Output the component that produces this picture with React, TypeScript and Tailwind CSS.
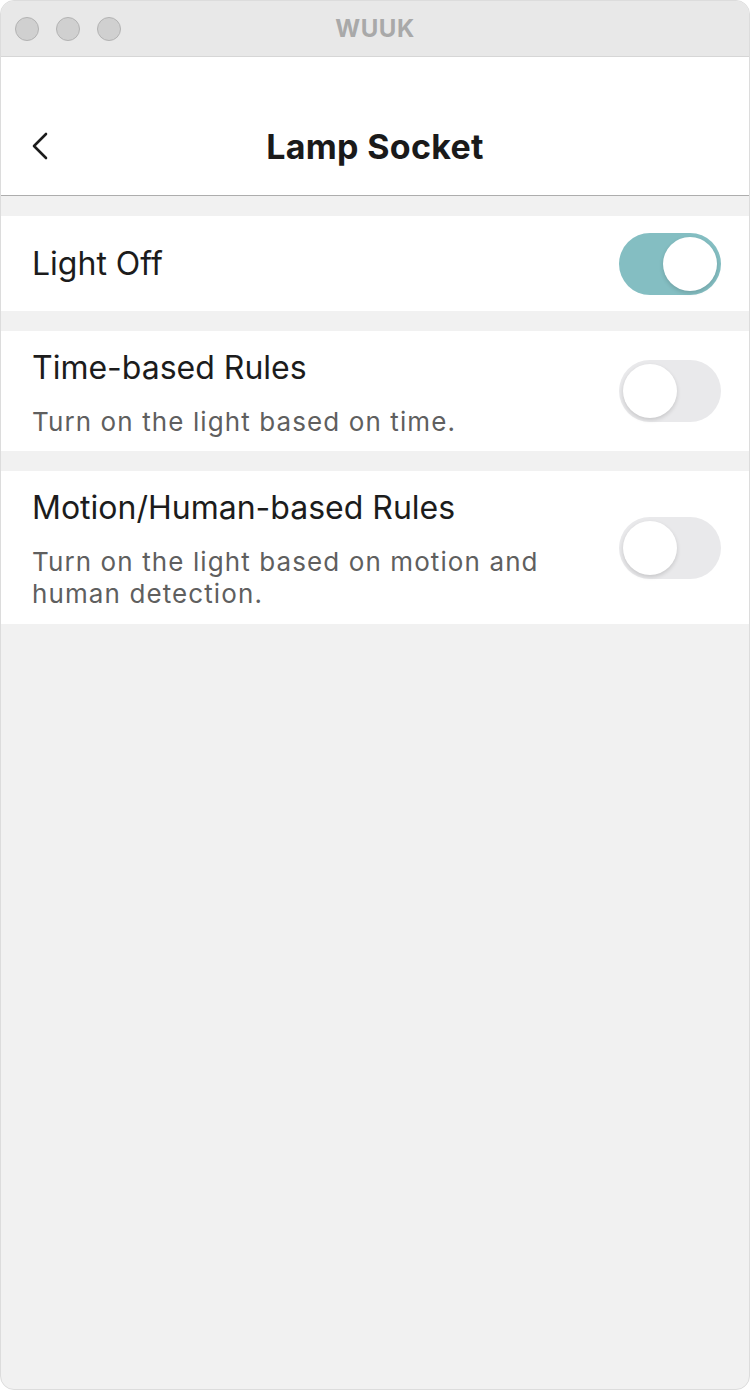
import { useState } from "react";

function Toggle({ on, onClick }: { on: boolean; onClick: () => void }) {
    return (
        <button
            onClick={onClick}
            className={`relative w-[102px] h-[62px] rounded-full shrink-0 self-center transition-colors ${on ? "bg-[#84bec2]" : "bg-[#e9e9eb]"
                }`}
        >
            <span
                className={`absolute top-[4px] w-[54px] h-[54px] rounded-full bg-white shadow-[0_2px_4px_rgba(0,0,0,0.15)] transition-all ${on ? "left-[44px]" : "left-[4px]"
                    }`}
            />
        </button>
    );
}

export default function App() {
    const [lightOn, setLightOn] = useState(true);
    const [timeRules, setTimeRules] = useState(false);
    const [motionRules, setMotionRules] = useState(false);

    return (
        <div className="w-[750px] h-[1390px] bg-white" style={{ fontFamily: "Inter, 'Liberation Sans', sans-serif" }}>
            <div className="w-full h-full rounded-[14px] overflow-hidden flex flex-col bg-[#f1f1f1] border border-[#dcdcdc]">
                {/* Title bar */}
                <div className="h-[56px] shrink-0 bg-[#e8e8e8] border-b border-[#d6d6d6] flex items-center relative">
                    <div className="flex gap-[17px] pl-[14px]">
                        {[0, 1, 2].map((i) => (
                            <span
                                key={i}
                                className="w-[24px] h-[24px] rounded-full bg-[#d0d0d0] border border-[#b3b3b3]"
                            />
                        ))}
                    </div>
                    <div className="absolute inset-0 flex items-center justify-center text-[24px] font-bold text-[#a9a9a9] tracking-[0.5px]">
                        WUUK
                    </div>
                </div>

                {/* Header */}
                <div className="h-[139px] shrink-0 bg-white border-b border-[#adadad] flex items-end pb-[30px] relative">
                    <button className="pl-[28px] pb-[5px]">
                        <svg width="22" height="28" viewBox="0 0 22 28" fill="none">
                            <path d="M17 2 L5 14 L17 26" stroke="#1c1c1c" strokeWidth="2.6" strokeLinecap="round" strokeLinejoin="round" />
                        </svg>
                    </button>
                    <h1 className="absolute inset-x-0 bottom-[28px] text-center text-[34px] font-bold text-[#1a1a1a] leading-[40px] tracking-[0.3px] pointer-events-none">
                        Lamp Socket
                    </h1>
                </div>

                <div className="flex flex-col gap-[20px] pt-[20px]">
                    <div className="bg-white h-[95px] flex items-center justify-between pl-[31px] pr-[28px]">
                        <span className="text-[32px] text-[#1c1c1c]">Light Off</span>
                        <Toggle on={lightOn} onClick={() => setLightOn(!lightOn)} />
                    </div>

                    <div className="bg-white h-[120px] flex justify-between pl-[31px] pr-[28px]">
                        <div className="flex flex-col gap-[20px] pt-[19px]">
                            <span className="text-[32px] leading-[36px] text-[#1c1c1c]">Time-based Rules</span>
                            <span className="text-[26px] leading-[32px] tracking-[1.1px] text-[#5f5f5f]">Turn on the light based on time.</span>
                        </div>
                        <Toggle on={timeRules} onClick={() => setTimeRules(!timeRules)} />
                    </div>

                    <div className="bg-white h-[153px] flex justify-between pl-[31px] pr-[28px]">
                        <div className="flex flex-col gap-[20px] w-[540px] pt-[19px]">
                            <span className="text-[32px] leading-[36px] text-[#1c1c1c]">Motion/Human-based Rules</span>
                            <span className="text-[26px] leading-[32px] tracking-[1.1px] text-[#5f5f5f]">
                                Turn on the light based on motion and human detection.
                            </span>
                        </div>
                        <Toggle on={motionRules} onClick={() => setMotionRules(!motionRules)} />
                    </div>
                </div>
            </div>
        </div>
    );
}
